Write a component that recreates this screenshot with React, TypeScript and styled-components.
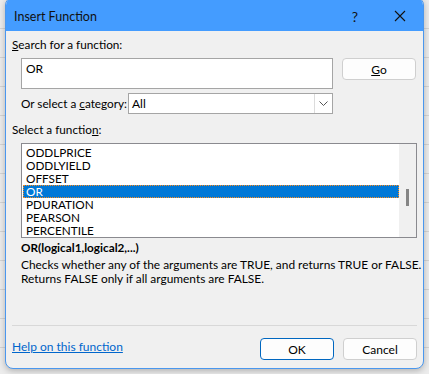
import styled, { createGlobalStyle } from 'styled-components'

const GlobalStyle = createGlobalStyle`
  html, body {
    margin: 0;
    padding: 0;
    overflow: hidden;
  }
  body {
    background: #e9e9e9;
    font-family: Lato, "Noto Sans", sans-serif;
  }
`

const Desktop = styled.div`
  width: 429px;
  height: 374px;
  overflow: hidden;
  background:
    repeating-linear-gradient(to bottom, transparent 0 28px, #d4d4d4 28px 29px),
    #ececec;
`

const Window = styled.div`
  box-sizing: border-box;
  width: 419px;
  height: 372px;
  margin: -3px 0 0 5px;
  border: 1px solid #4a97ee;
  border-radius: 8px;
  background: #f0f0f0;
  overflow: hidden;
  box-shadow: 0 2px 6px rgba(0, 0, 0, 0.25);
  display: flex;
  flex-direction: column;
  color: #000;
  font-size: 11.75px;
`

const TitleBar = styled.div`
  height: 33px;
  flex: none;
  background: #449cff;
  display: flex;
  align-items: center;
  padding: 3px 0 0 8px;
  box-sizing: border-box;
`

const Title = styled.div`
  flex: 1;
  font-size: 12.5px;
  color: #111;
`

const HelpGlyph = styled.div`
  width: 40px;
  text-align: center;
  font-size: 14px;
  color: #111;
  margin-right: 2px;
`

const CloseButton = styled.div`
  width: 46px;
  display: flex;
  justify-content: center;
  align-items: center;
`

const Body = styled.div`
  flex: 1;
  display: flex;
  flex-direction: column;
  padding: 4px 6px 0 6px;
`

const Label = styled.div<{ $mt?: number }>`
  height: 14px;
  line-height: 14px;
  margin-top: ${({ $mt }) => $mt ?? 0}px;
  white-space: nowrap;
`

const Row = styled.div<{ $mt: number }>`
  display: flex;
  align-items: flex-start;
  margin-top: ${({ $mt }) => $mt}px;
  padding-left: 9px;
`

const SearchBox = styled.div`
  box-sizing: border-box;
  width: 312px;
  height: 31px;
  background: #fff;
  border: 1px solid #a5a5a5;
  padding: 2px 0 0 4px;
  font-size: 12px;
`

const PushButton = styled.div<{ $default?: boolean }>`
  box-sizing: border-box;
  width: 74px;
  height: 22px;
  margin-left: ${({ $default }) => ($default ? 0 : 9)}px;
  background: #fdfdfd;
  border: 1px solid ${({ $default }) => ($default ? '#0067c0' : '#cfcfcf')};
  border-radius: 4px;
  display: flex;
  align-items: center;
  justify-content: center;
  font-size: 12px;
`

const CategoryRow = styled.div`
  display: flex;
  align-items: center;
  margin-top: 4px;
  padding-left: 9px;
`

const CategoryLabel = styled.div`
  width: 107px;
  white-space: nowrap;
`

const Select = styled.div`
  box-sizing: border-box;
  width: 205px;
  height: 21px;
  background: #fff;
  border: 1px solid #a5a5a5;
  display: flex;
  align-items: center;
  padding-left: 3px;
  font-size: 12px;
`

const SelectValue = styled.div`
  flex: 1;
`

const Arrow = styled.div`
  width: 17px;
  height: 19px;
  border-left: 1px solid #dcdcdc;
  display: flex;
  align-items: center;
  justify-content: center;
`

const ListBox = styled.div`
  box-sizing: border-box;
  width: 396px;
  height: 95px;
  margin-top: 6px;
  margin-left: 9px;
  border: 1px solid #8a8a8f;
  display: flex;
  background: #fff;
`

const Items = styled.div`
  flex: 1;
  padding: 2px 0 0 1px;
`

const Item = styled.div<{ $selected?: boolean }>`
  height: 13px;
  line-height: 13px;
  padding-left: 3px;
  font-size: 11.75px;
  background: ${({ $selected }) => ($selected ? '#0078d7' : 'transparent')};
  color: ${({ $selected }) => ($selected ? '#fff' : '#000')};
  outline: ${({ $selected }) => ($selected ? '1px dotted #ff8c1a' : 'none')};
  outline-offset: -1px;
`

const ScrollBar = styled.div`
  width: 17px;
  background: #f0f0f0;
  position: relative;
`

const Thumb = styled.div`
  position: absolute;
  left: 7px;
  top: 45px;
  width: 3px;
  height: 17px;
  background: #858585;
`

const Signature = styled.div`
  margin-top: 3px;
  padding-left: 9px;
  font-weight: bold;
  height: 14px;
  line-height: 14px;
`

const Description = styled.div`
  margin-top: 3px;
  padding-left: 9px;
  line-height: 13.5px;
  font-size: 11.9px;
  white-space: nowrap;
`

const Spacer = styled.div`
  flex: 1;
`

const Separator = styled.div`
  height: 1px;
  background: #d8d8d8;
`

const Footer = styled.div`
  display: flex;
  align-items: flex-start;
  height: 42px;
  padding-top: 12px;
  box-sizing: border-box;
`

const HelpLink = styled.a`
  flex: 1;
  color: #0066cc;
  text-decoration: underline;
  font-size: 12px;
  margin-top: 1px;
`

const App = () => {
  const items = ['ODDLPRICE', 'ODDLYIELD', 'OFFSET', 'OR', 'PDURATION', 'PEARSON', 'PERCENTILE']

  return (
    <Desktop>
      <GlobalStyle />
      <Window>
        <TitleBar>
          <Title>Insert Function</Title>
          <HelpGlyph>?</HelpGlyph>
          <CloseButton>
            <svg width="12" height="12" viewBox="0 0 12 12">
              <path d="M1 1 L11 11 M11 1 L1 11" stroke="#111" strokeWidth="1.1" />
            </svg>
          </CloseButton>
        </TitleBar>
        <Body>
          <Label $mt={3}><u>S</u>earch for a function:</Label>
          <Row $mt={6}>
            <SearchBox>OR</SearchBox>
            <PushButton><u>G</u>o</PushButton>
          </Row>
          <CategoryRow>
            <CategoryLabel>Or select a <u>c</u>ategory:</CategoryLabel>
            <Select>
              <SelectValue>All</SelectValue>
              <Arrow>
                <svg width="9" height="5" viewBox="0 0 9 5">
                  <path d="M0.5 0.5 L4.5 4.5 L8.5 0.5" stroke="#555" fill="none" />
                </svg>
              </Arrow>
            </Select>
          </CategoryRow>
          <Label $mt={9}>Select a functio<u>n</u>:</Label>
          <ListBox>
            <Items>
              {items.map(name => (
                <Item key={name} $selected={name === 'OR'}>{name}</Item>
              ))}
            </Items>
            <ScrollBar>
              <Thumb />
            </ScrollBar>
          </ListBox>
          <Signature>OR(logical1,logical2,...)</Signature>
          <Description>
            Checks whether any of the arguments are TRUE, and returns TRUE or FALSE.
            <br />
            Returns FALSE only if all arguments are FALSE.
          </Description>
          <Spacer />
          <Separator />
          <Footer>
            <HelpLink>Help on this function</HelpLink>
            <PushButton $default>OK</PushButton>
            <PushButton>Cancel</PushButton>
          </Footer>
        </Body>
      </Window>
    </Desktop>
  )
}

export default App
